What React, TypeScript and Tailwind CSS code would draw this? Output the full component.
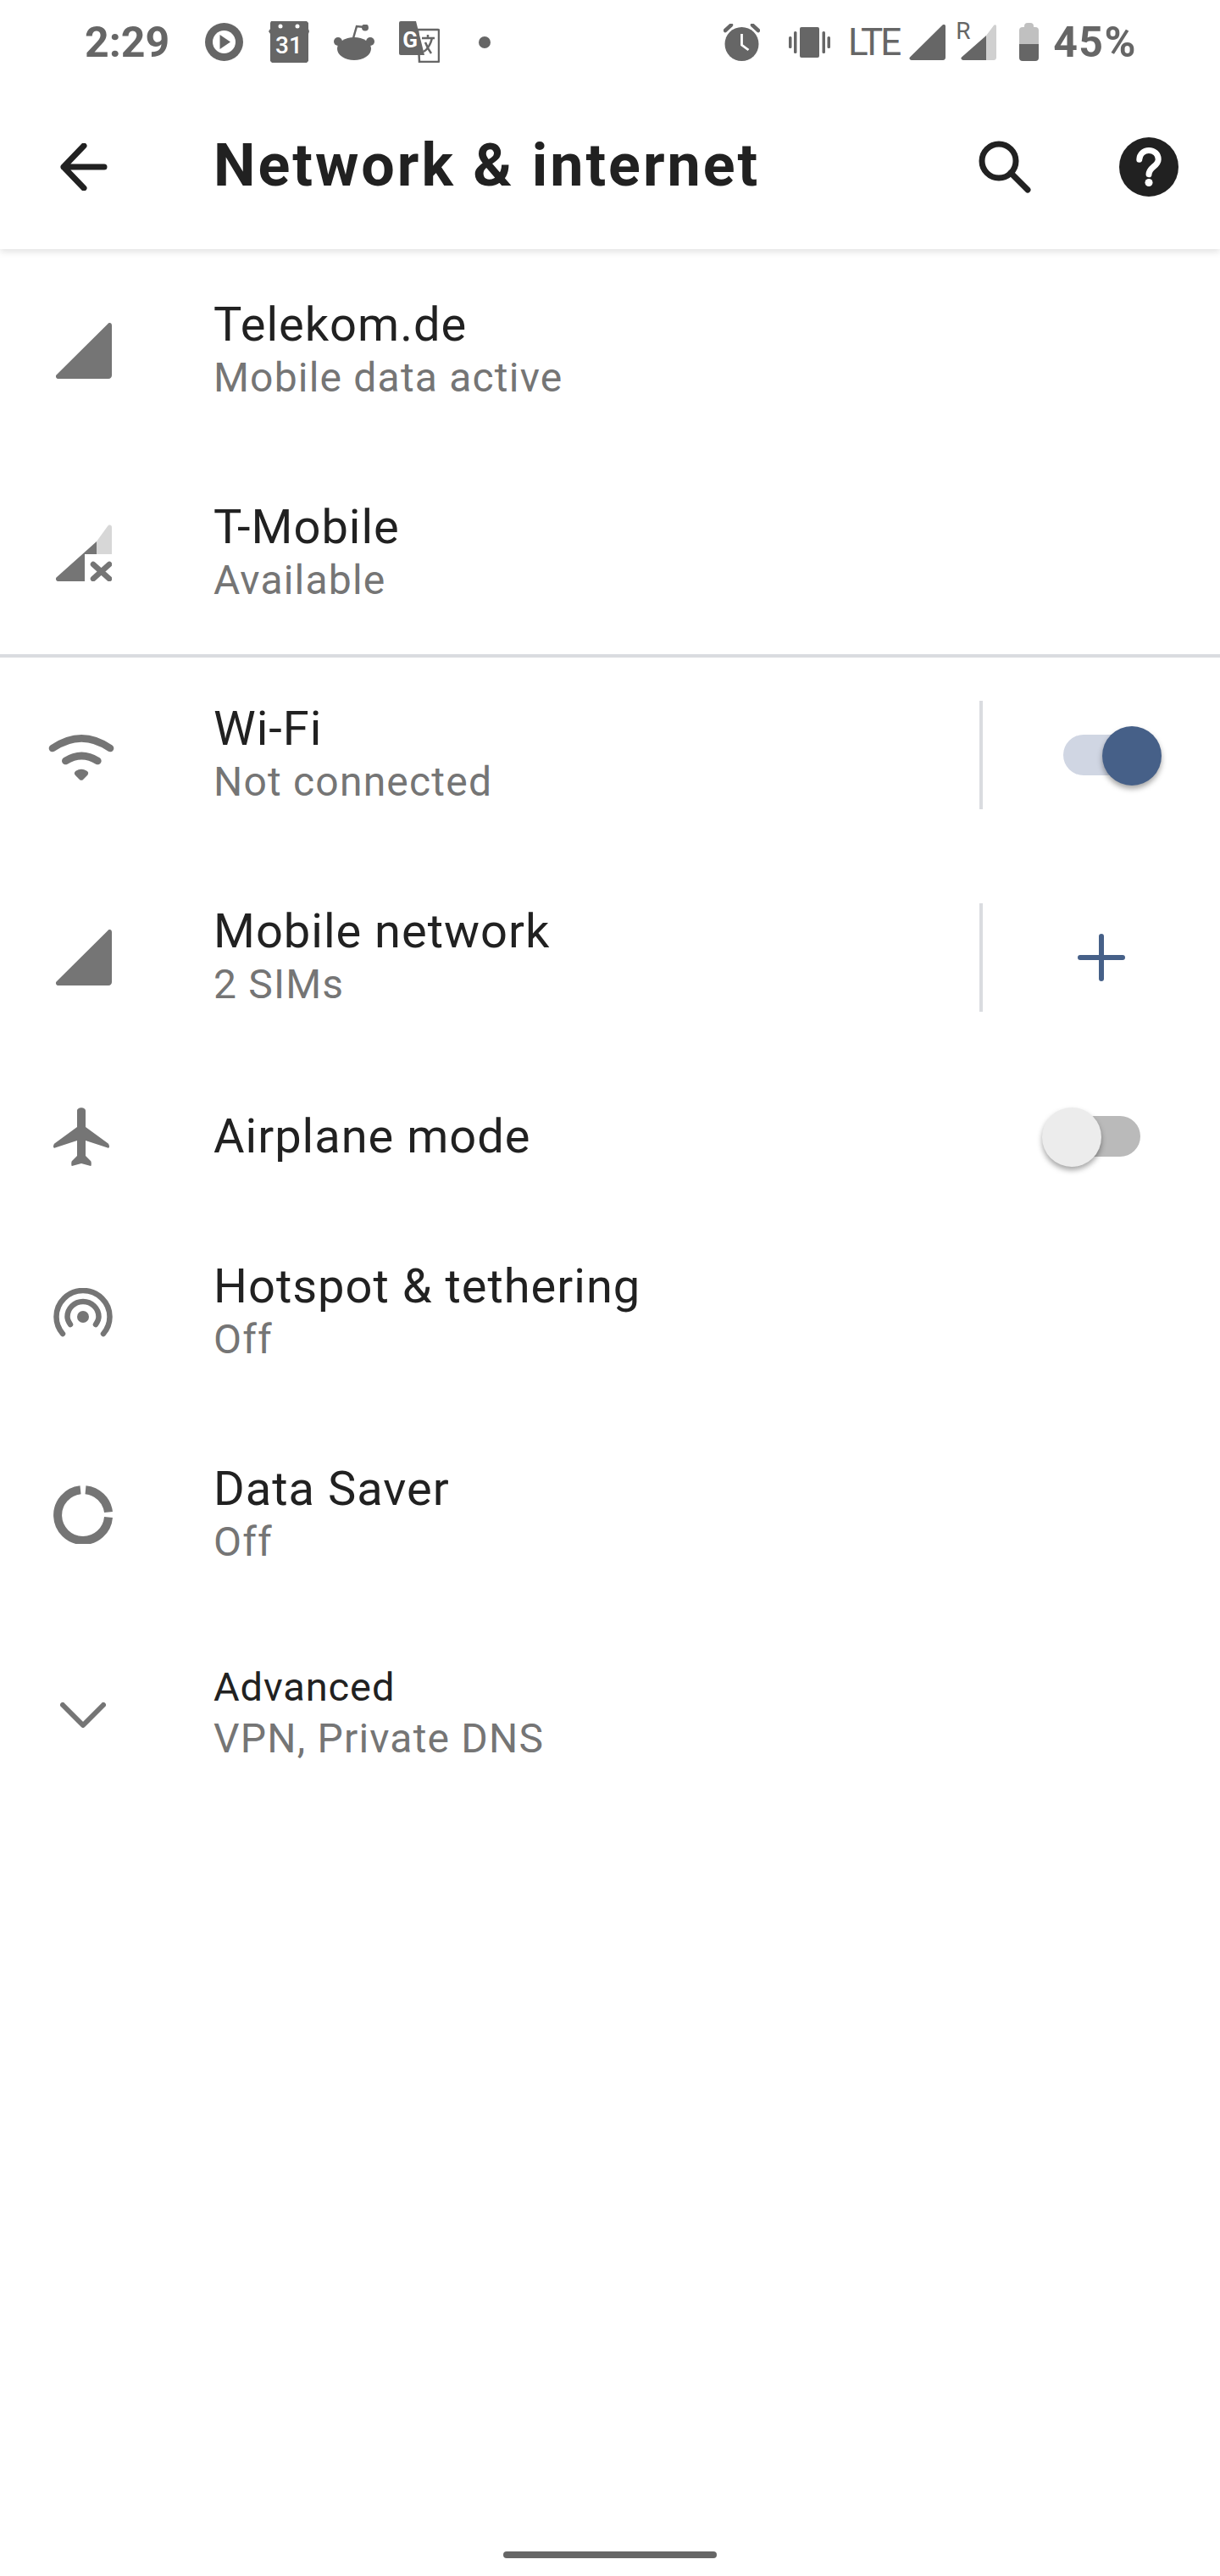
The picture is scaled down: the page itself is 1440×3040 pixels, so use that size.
import type { ReactNode } from 'react';

const font = "[font-family:Roboto,'Noto_Sans',sans-serif]";

function Signal({ className = 'fill-[#757575]' }: { className?: string }) {
  return (
    <svg width="66" height="66" viewBox="0 0 66 66" className="ml-[2px] shrink-0">
      <path className={className} d="M61 1.500c2-2.500 5-1.500 5 1.500v59c0 2-1.500 4-4 4H3c-2.500 0-4-2.500-2.500-4.500z" />
    </svg>
  );
}

function SignalX() {
  return (
    <svg width="66" height="67" viewBox="0 0 66 67" className="ml-[2px] shrink-0">
      <path fill="#d7d7d7" d="M48 20 61 2c2-2.500 5-1.500 5 1.500V35H48z" />
      <path fill="#757575" d="M48 20v15H34v32H3c-2.500 0-4-2.500-2.500-4.500z" />
      <path stroke="#757575" strokeWidth="6.500" strokeLinecap="round" fill="none" d="M44 47l19 17M63 47 44 64" />
    </svg>
  );
}

function Wifi() {
  return (
    <svg width="120" height="100" viewBox="0 0 360 300" fill="none" stroke="#757575" strokeWidth="26" strokeLinecap="round" className="mt-[3px] shrink-0">
      <path d="M72 120Q175 50 276 120" />
      <path d="M118 165Q175 129 232 165" />
      <path d="M160 209Q174 200 188 209L174 223z" fill="#757575" strokeLinejoin="round" strokeWidth="20" />
    </svg>
  );
}

function Airplane() {
  return (
    <svg width="66" height="69" viewBox="0 0 66 69" fill="#757575" className="-ml-[4px] shrink-0">
      <path d="M28 4c0-5 10-5 10 0v19l26 19c1.500 1 2 2.500 2 4.500 0 1-1 1.500-2 1L38 39v18l6 6c1 1 1 6 0 6l-11-3-11 3c-1 0-1-5 0-6l6-6V39L2 47.500c-1 .5-2 0-2-1 0-2 .5-3.500 2-4.500l26-19z" />
    </svg>
  );
}

function Hotspot() {
  return (
    <svg width="70" height="58" viewBox="0 0 70 58" fill="none" stroke="#757575" strokeWidth="6.500" strokeLinecap="round" className="shrink-0">
      <path d="M11 54C6 48 3.500 41 3.500 34a31.500 31 0 0 1 63 0c0 7-2.500 14-7.500 20" />
      <path d="M20 43c-2-3-3.500-6-3.500-9a18.500 18 0 0 1 37 0c0 3-1.500 6-3.500 9" />
      <circle cx="35" cy="34" r="7" fill="#757575" stroke="none" />
    </svg>
  );
}

function DataSaver() {
  return (
    <svg width="70" height="69" viewBox="0 0 70 69" fill="none" stroke="#757575" strokeWidth="10" className="shrink-0">
      <path d="M32 5.200A30 30 0 1 0 65 37.500" />
      <path d="M38 5.200A30 30 0 0 1 65 31.500" />
    </svg>
  );
}

function Chevron() {
  return (
    <svg width="54" height="30" viewBox="0 0 54 30" fill="none" stroke="#757575" strokeWidth="6" strokeLinecap="round" strokeLinejoin="round" className="mt-[4px] shrink-0">
      <path d="M3 3l24 24L51 3" />
    </svg>
  );
}

function Toggle({ on }: { on: boolean }) {
  return (
    <div className={`relative h-[48px] w-[90px] rounded-full ${on ? 'bg-[#d0d6e3]' : 'bg-[#bababa]'}`}>
      <div className={`absolute top-[-10px] h-[70px] w-[70px] rounded-full shadow-[0_4px_6px_rgba(0,0,0,0.35)] ${on ? 'left-[46px] bg-[#466088]' : 'left-[-26px] bg-[#ececec]'}`} />
    </div>
  );
}

function Row({ icon, title, sub, action, small, height = 'h-[239px]' }: {
  icon: ReactNode; title: string; sub?: string; action?: ReactNode; small?: boolean; height?: string;
}) {
  return (
    <div className={`flex items-center ${height}`}>
      <div className="flex w-[252px] shrink-0 justify-center pr-[56px]">{icon}</div>
      <div className="flex-1">
        <div className={`text-[#212121] ${small ? 'text-[47px] leading-[60px] tracking-[0.9px]' : 'text-[56px] leading-[64px] tracking-[1px]'}`}>{title}</div>
        {sub && <div className="text-[48px] leading-[62px] tracking-[1.2px] text-[#757575]">{sub}</div>}
      </div>
      {action}
    </div>
  );
}

function SplitAction({ children }: { children: ReactNode }) {
  return (
    <div className="flex h-[128px] w-[284px] items-center justify-center border-l-4 border-[#dadce0]">
      {children}
    </div>
  );
}

export default function App() {
  return (
    <div className={`h-[3040px] w-[1440px] overflow-hidden bg-white ${font}`}>
      <header className="h-[294px] shadow-[0_3px_8px_rgba(0,0,0,0.12)]">
        <div className="flex h-[99px] items-center justify-between pl-[100px] pr-[98px]">
          <div className="flex items-center">
            <span className="text-[50px] font-bold leading-none text-[#666]">2:29</span>
            <svg width="45" height="45" viewBox="0 0 45 45" className="ml-[42px]">
              <circle cx="22.500" cy="22.500" r="22.500" fill="#666" />
              <circle cx="22.500" cy="22.500" r="13.500" fill="#fff" />
              <path d="M17.500 14 30 22.500 17.500 31z" fill="#666" />
            </svg>
            <svg width="48" height="49" viewBox="0 0 48 49" className="ml-[30px]">
              <path d="M3 0h42l2 2v7l1 3-1 3v32l-2 2H4l-2-2V15l-2-3 2-3V2z" fill="#666" />
              <circle cx="14" cy="6" r="2.500" fill="#fff" />
              <circle cx="34" cy="6" r="2.500" fill="#fff" />
              <text x="24" y="38" textAnchor="middle" fontSize="28" fontWeight="500" fill="#fff" fontFamily="Roboto">31</text>
            </svg>
            <svg width="48" height="42" viewBox="0 0 48 42" className="ml-[29px]">
              <ellipse cx="24" cy="28.500" rx="20" ry="13.500" fill="#666" />
              <circle cx="5" cy="20" r="5" fill="#666" />
              <circle cx="43" cy="20" r="5" fill="#666" />
              <path d="M23 16 27 2l9 1" fill="none" stroke="#666" strokeWidth="2.500" />
              <circle cx="37" cy="3.500" r="4" fill="#666" />
            </svg>
            <svg width="48" height="49" viewBox="0 0 48 49" className="ml-[29px]">
              <path d="M22 10h24a1 1 0 0 1 1 1v36a1 1 0 0 1-1 1H24z" fill="#fff" stroke="#666" strokeWidth="2.500" />
              <path d="M2 0h18l10 40H2a2 2 0 0 1-2-2V2a2 2 0 0 1 2-2z" fill="#666" />
              <text x="13" y="31" textAnchor="middle" fontSize="26" fontWeight="700" fill="#fff" fontFamily="Roboto">G</text>
              <path d="M27 20h15M34 16v4M39 20c-2 8-5 13-10 16M31 25c2 5 4 9 7 13" fill="none" stroke="#666" strokeWidth="2.500" />
            </svg>
            <span className="ml-[46px] h-[14px] w-[14px] rounded-full bg-[#666]" />
          </div>
          <div className="flex items-center">
            <svg width="43" height="44" viewBox="0 0 43 44">
              <circle cx="21.500" cy="24" r="20" fill="#666" />
              <path d="M21.500 12v13l8 6" fill="none" stroke="#fff" strokeWidth="2.800" />
              <path d="M2 8 9 1.500M41 8 34 1.500" stroke="#666" strokeWidth="4.500" strokeLinecap="round" />
            </svg>
            <svg width="49" height="36" viewBox="0 0 49 36" className="ml-[34px]">
              <rect x="13" y="0" width="23" height="36" rx="2" fill="#666" />
              <rect x="6" y="5" width="3.500" height="26" rx="1.500" fill="#666" />
              <rect x="39.500" y="5" width="3.500" height="26" rx="1.500" fill="#666" />
              <rect x="0" y="11" width="3.500" height="14" rx="1.500" fill="#666" />
              <rect x="45.500" y="11" width="3.500" height="14" rx="1.500" fill="#666" />
            </svg>
            <span className="ml-[21px] text-[44px] font-normal leading-none tracking-[-3px] text-[#666]">LTE</span>
            <svg width="43" height="42" viewBox="0 0 43 42" className="ml-[12px]">
              <path d="M39 1c2-2 4-1 4 1v37c0 1.500-1 3-3 3H3c-2 0-3.500-2-2-3.500z" fill="#666" />
            </svg>
            <div className="relative ml-[18px] h-[42px] w-[42px]">
              <span className="absolute left-[-6px] top-[-6px] text-[28px] leading-none text-[#666]">R</span>
              <svg width="42" height="42" viewBox="0 0 42 42">
                <path d="M30 13l9-12c1-1.500 3-1 3 1v37c0 1.500-1 3-3 3h-9z" fill="#d0d0d0" />
                <path d="M30 13v29H3c-2 0-3.500-2-2-3.500z" fill="#666" />
              </svg>
            </div>
            <div className="ml-[27px] flex h-[45px] w-[23px] flex-col items-center">
              <div className="h-[5px] w-[11px] rounded-t-sm bg-[#c0c0c0]" />
              <div className="h-[20px] w-full rounded-t-sm bg-[#c0c0c0]" />
              <div className="h-[20px] w-full rounded-b-sm bg-[#666]" />
            </div>
            <span className="ml-[17px] text-[50px] font-bold leading-none tracking-[1.500px] text-[#666]">45%</span>
          </div>
        </div>
        <div className="flex h-[195px] items-center">
          <div className="flex w-[252px] shrink-0 pl-[71px]">
            <svg width="56" height="56" viewBox="0 0 56 56" fill="none" stroke="#212121" strokeWidth="7" strokeLinecap="round" strokeLinejoin="round">
              <path d="M4 28h48M28 3 4 28l24 25" />
            </svg>
          </div>
          <h1 className="mb-[3px] flex-1 text-[70px] font-bold leading-none tracking-[3px] text-[#212121]">Network &amp; internet</h1>
          <svg width="62" height="62" viewBox="0 0 62 62" fill="none" stroke="#212121" strokeWidth="7" strokeLinecap="round">
            <circle cx="24" cy="24" r="20" />
            <path d="M38 38l20 20" />
          </svg>
          <svg width="70" height="70" viewBox="0 0 20 20" className="ml-[104px] mr-[49px]">
            <circle cx="10" cy="10" r="10" fill="#212121" />
            <path d="M6.800 7.500A3.200 3.200 0 0 1 10 4.400c1.800 0 3.200 1.300 3.200 3 0 2.400-3.100 2.500-3.200 5.100" fill="none" stroke="#fff" strokeWidth="2" strokeLinecap="round" />
            <circle cx="10" cy="15.300" r="1.300" fill="#fff" />
          </svg>
        </div>
      </header>
      <main>
        <Row icon={<Signal />} title="Telekom.de" sub="Mobile data active" />
        <Row icon={<SignalX />} title="T-Mobile" sub="Available" />
        <div className="relative -mb-[1px] h-1 bg-[#dadce0]" />
        <Row icon={<Wifi />} title="Wi-Fi" sub="Not connected" action={<SplitAction><Toggle on /></SplitAction>} height="h-[232px]" />
        <Row icon={<Signal />} title="Mobile network" sub="2 SIMs" action={
          <SplitAction>
            <svg width="56" height="56" viewBox="0 0 56 56" stroke="#466088" strokeWidth="6" strokeLinecap="round">
              <path d="M3 28h50M28 3v50" />
            </svg>
          </SplitAction>
        } height="h-[246px]" />
        <Row icon={<Airplane />} title="Airplane mode" action={<div className="mr-[94px]"><Toggle on={false} /></div>} height="h-[176px]" />
        <Row icon={<Hotspot />} title="Hotspot &amp; tethering" sub="Off" />
        <Row icon={<DataSaver />} title="Data Saver" sub="Off" />
        <Row icon={<Chevron />} title="Advanced" sub="VPN, Private DNS" small height="h-[229px]" />
      </main>
      <div className="mx-auto mt-[875px] h-[8px] w-[252px] rounded-full bg-[#666]" />
    </div>
  );
}
